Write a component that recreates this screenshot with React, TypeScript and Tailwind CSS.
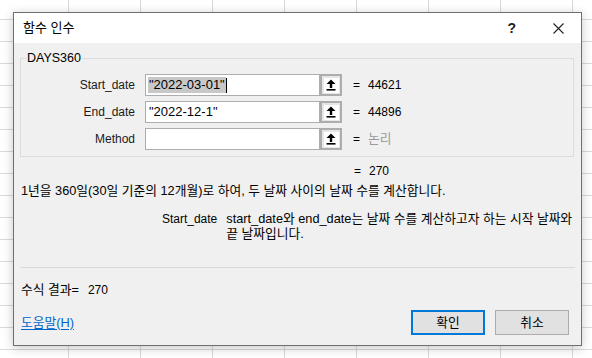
import React from "react";

const font = "font-['Liberation_Sans','Noto_Sans_CJK_KR',sans-serif]";

function RefButton() {
  return (
    <div className="flex h-[22px] w-[22px] items-center justify-center border-2 border-[#adadad] bg-[#e6e6e6]">
      <div className="flex h-[15px] w-[15px] items-center justify-center bg-white">
        <svg width="10" height="12" viewBox="0 0 10 12">
          <path d="M5 0.5 L9.5 5 L6.2 5 L6.2 9 L3.8 9 L3.8 5 L0.5 5 Z" fill="#000" />
          <rect x="0.5" y="10" width="9" height="1.6" fill="#000" />
        </svg>
      </div>
    </div>
  );
}

function ArgRow({
  label,
  value,
  result,
  muted,
  selected,
}: {
  label: string;
  value: React.ReactNode;
  result: string;
  muted?: boolean;
  selected?: boolean;
}) {
  return (
    <div className="flex h-[22px] items-center">
      <div className="w-[114px] text-right text-[#1a1a1a]">{label}</div>
      <div className="ml-[10px] flex h-[22px] w-[175px] items-center border border-[#adadad] bg-white pl-[2px]">
        {selected ? (
          <>
            <span className="bg-[#c8c8c8] px-[1px] text-[13px] text-black">{value}</span>
            <span className="h-[15px] w-[1px] bg-black" />
          </>
        ) : (
          <span className="px-[1px] text-[13px] text-black">{value}</span>
        )}
      </div>
      <RefButton />
      <div className="ml-[11px] w-[15px] text-black">=</div>
      <div className={muted ? "text-[12.75px] text-[#9a9a9a]" : "text-black"}>{result}</div>
    </div>
  );
}

export default function App() {
  return (
    <div
      className={`relative h-[358px] w-[592px] overflow-hidden bg-white ${font} text-[12px] leading-[16px] [background-image:linear-gradient(to_right,#dadada_1px,transparent_1px),linear-gradient(to_bottom,#dadada_1px,transparent_1px)] [background-size:72px_22px] [background-position:68px_19px]`}
    >
      <div className="absolute left-[13px] top-[12px] flex h-[334px] w-[569px] flex-col border border-[#6f6f6f] bg-[#f0f0f0] shadow-[0_2px_10px_rgba(0,0,0,0.22)]">
        {/* title bar */}
        <div className="flex h-[30px] items-center bg-white pl-[9px]">
          <div className="text-[13px] text-black">함수 인수</div>
          <div className="ml-auto mr-[37px] text-[14px] font-bold text-[#222]">?</div>
          <svg className="mr-[17px]" width="11" height="11" viewBox="0 0 11 11">
            <path d="M0.5 0.5 L10.5 10.5 M10.5 0.5 L0.5 10.5" stroke="#222" strokeWidth="1.1" />
          </svg>
        </div>

        {/* body */}
        <div className="flex flex-1 flex-col px-[6px]">
          <div className="relative mt-[15px] w-[554px] border border-[#dcdcdc] pb-[6px] pt-[15px]">
            <div className="absolute left-[5px] top-[-9px] bg-[#f0f0f0] px-[1px] text-[12.5px] text-black">DAYS360</div>
            <div className="flex flex-col gap-[5px]">
              <ArgRow label="Start_date" value={'"2022-03-01"'} result="44621" selected />
              <ArgRow label="End_date" value={'"2022-12-1"'} result="44896" />
              <ArgRow label="Method" value="" result="논리" muted />
            </div>
          </div>

          <div className="mt-[6px] flex h-[16px] items-center pl-[334px] text-black">
            <span className="w-[15px]">=</span>
            <span>270</span>
          </div>
          <div className="mt-[4px] pl-[1px] text-[12.75px] text-black">
            1년을 360일(30일 기준의 12개월)로 하여, 두 날짜 사이의 날짜 수를 계산합니다.
          </div>

          <div className="mt-[12px] flex text-black">
            <div className="w-[198px] text-right">Start_date</div>
            <div className="ml-[9px] w-[350px] text-[12.75px] leading-[15px]">
              start_date와 end_date는 날짜 수를 계산하고자 하는 시작 날짜와
              <br />
              끝 날짜입니다.
            </div>
          </div>

          <div className="mt-[26px] h-[1px] w-[555px] bg-[#d9d9d9]" />

          <div className="mt-[14px] flex pl-[1px] text-black">
            <span className="text-[12.75px]">수식 결과=</span>
            <span className="ml-[9px]">270</span>
          </div>

          <div className="mt-[12px] flex items-center">
            <a className="pl-[1px] text-[12.75px] text-[#0066cc] underline underline-offset-2">도움말(H)</a>
            <button className="ml-auto flex h-[25px] w-[74px] items-center justify-center border-2 border-[#0078d7] bg-[#e1e1e1] text-[12.75px] text-black">
              확인
            </button>
            <button className="ml-[10px] mr-[6px] flex h-[25px] w-[74px] items-center justify-center border border-[#adadad] bg-[#e1e1e1] text-[12.75px] text-black">
              취소
            </button>
          </div>
        </div>
      </div>
    </div>
  );
}
